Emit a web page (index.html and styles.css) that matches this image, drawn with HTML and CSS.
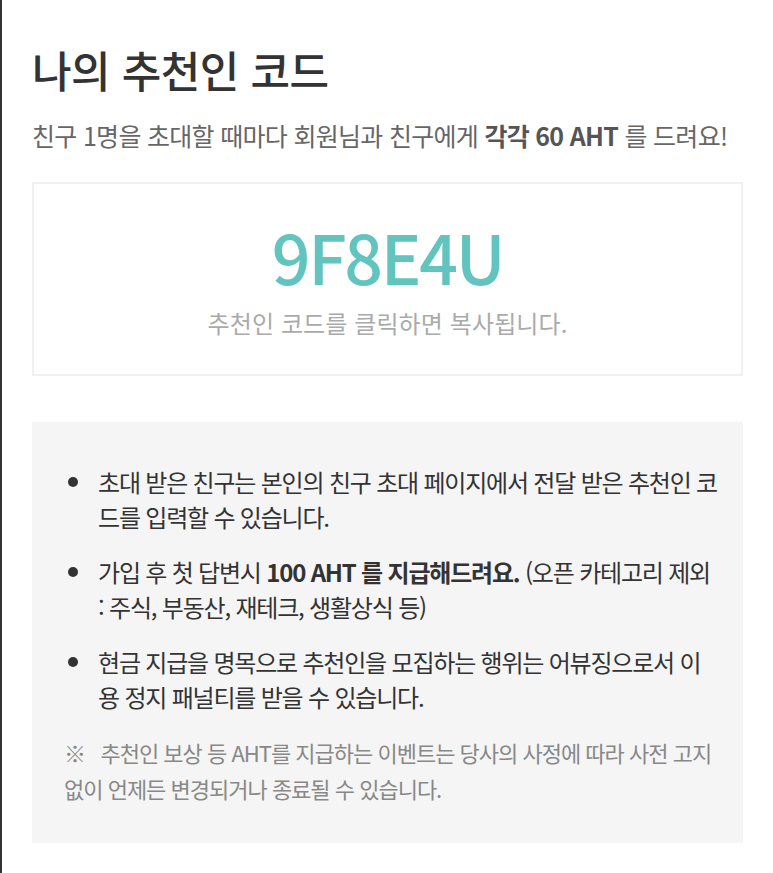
FILE: index.html
```html
<!DOCTYPE html>
<html lang="ko">
<head>
<meta charset="utf-8">
<link rel="stylesheet" href="styles.css">
</head>
<body>
<div class="page">
  <h1 class="title">나의 추천인 코드</h1>
  <p class="lead">친구 1명을 초대할 때마다 회원님과 친구에게 <strong>각각 60 AHT</strong> 를 드려요!</p>
  <div class="code-box">
    <div class="code">9F8E4U</div>
    <div class="code-hint">추천인 코드를 클릭하면 복사됩니다.</div>
  </div>
  <div class="info">
    <ul class="rules">
      <li>초대 받은 친구는 본인의 친구 초대 페이지에서 전달 받은 추천인 코드를 입력할 수 있습니다.</li>
      <li>가입 후 첫 답변시 <strong>100 AHT 를 지급해드려요.</strong> (오픈 카테고리 제외 : 주식, 부동산, 재테크, 생활상식 등)</li>
      <li>현금 지급을 명목으로 추천인을 모집하는 행위는 어뷰징으로서 이용 정지 패널티를 받을 수 있습니다.</li>
    </ul>
    <p class="note">※&nbsp;&nbsp; 추천인 보상 등 AHT를 지급하는 이벤트는 당사의 사정에 따라 사전 고지 없이 언제든 변경되거나 종료될 수 있습니다.</p>
  </div>
</div>
</body>
</html>
```
FILE: styles.css
```css
html, body {
  margin: 0;
  padding: 0;
  background: #fff;
}
body {
  font-family: "Noto Sans CJK KR", "Noto Sans", sans-serif;
  border-left: 2px solid #333;
  min-height: 873px;
  box-sizing: border-box;
}
.page {
  padding: 40px 30px 0 30px;
  width: 711px;
}
.title {
  margin: 0;
  font-size: 43px;
  font-weight: 500;
  color: #333;
  letter-spacing: -0.5px;
  line-height: 58px;
}
.lead {
  margin: 19px 0 0;
  font-size: 25px;
  color: #666;
  letter-spacing: -0.7px;
  line-height: 36px;
}
.lead strong {
  color: #555;
  font-weight: 700;
}
.code-box {
  margin-top: 29px;
  border: 2px solid #f0f0f0;
  height: 194px;
  display: flex;
  flex-direction: column;
  align-items: center;
  padding-top: 36px;
  box-sizing: border-box;
}
.code {
  font-size: 68px;
  font-weight: 500;
  color: #62c4bf;
  line-height: 72px;
  letter-spacing: -2.3px;
}
.code-hint {
  margin-top: 13px;
  font-size: 24px;
  line-height: 35px;
  color: #aaa;
  letter-spacing: 0.1px;
}
.info {
  margin-top: 46px;
  background: #f5f5f5;
  padding: 42px 25px 44px 36px;
  height: 421px;
  box-sizing: border-box;
}
.rules {
  margin: 0;
  padding: 0 0 0 30px;
  list-style: none;
}
.rules li {
  position: relative;
  font-size: 24px;
  color: #333;
  line-height: 35px;
  letter-spacing: -1.2px;
  margin-bottom: 20px;
}
.rules li::before {
  content: "";
  position: absolute;
  left: -30px;
  top: 13px;
  width: 10px;
  height: 10px;
  border-radius: 50%;
  background: #333;
}
.rules strong {
  font-weight: 700;
}
.note {
  margin: 20px 0 0 -4px;
  font-size: 22px;
  color: #888;
  line-height: 36px;
  letter-spacing: -1px;
}
```
